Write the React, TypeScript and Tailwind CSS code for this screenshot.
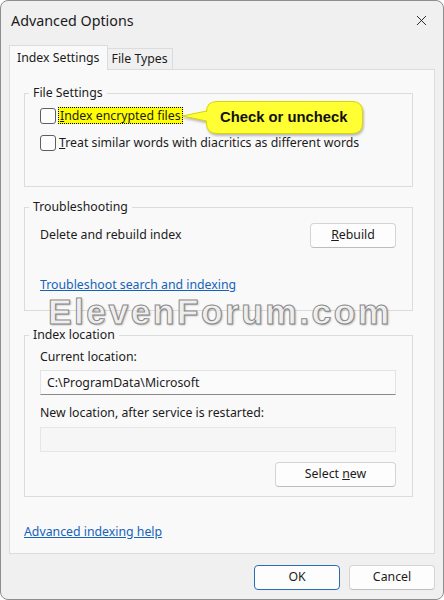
import React from 'react';
import { X } from 'lucide-react';

const ui = { fontFamily: '"Noto Sans", "Segoe UI", Arial, sans-serif' };

const Checkbox = () => (
  <span className="w-4 h-4 shrink-0 rounded-[3px] border border-[#5f5f5f] bg-[#fdfdfd]" />
);

const Button = ({ children, accent = false, className = '' }: { children: React.ReactNode; accent?: boolean; className?: string }) => (
  <button
    className={`h-[25px] rounded-[4px] bg-[#fdfdfd] text-[12.3px] text-[#1b1b1b] flex items-center justify-center ${
      accent ? 'border border-[#2a6bb3]' : 'border border-[#d4d4d4] border-b-[#bdbdbd]'
    } ${className}`}
  >
    {children}
  </button>
);

const GroupBox = ({ title, className = '', children }: { title: string; className?: string; children: React.ReactNode }) => (
  <fieldset className={`border border-[#dcdcdc] w-[389px] ${className}`}>
    <legend className="ml-[4px] px-[4px] text-[12.3px] leading-[16px] text-[#1b1b1b]">{title}</legend>
    {children}
  </fieldset>
);

export default function App() {
  return (
    <div
      className="relative w-[444px] h-[600px] bg-[#f0f0f0] border border-[#8e8e8e] rounded-[8px] overflow-hidden flex flex-col text-[#1b1b1b]"
      style={ui}
    >
      {/* Title bar */}
      <div className="h-[39px] flex items-center justify-between pl-[10px] pr-[13px] shrink-0">
        <span className="text-[14.3px]">Advanced Options</span>
        <X className="w-[17px] h-[17px] text-[#1b1b1b]" strokeWidth={1.3} />
      </div>

      {/* Tabs */}
      <div className="flex items-end pl-[8px] h-[30px] shrink-0 relative z-10">
        <div className="h-[25px] px-[7px] bg-[#f9f9f9] border border-[#dcdcdc] border-b-0 text-[12.3px] flex items-center">
          Index Settings
        </div>
        <div className="h-[21px] mb-[1px] px-[4px] bg-[#f0f0f0] border border-[#dcdcdc] border-l-0 border-b-0 text-[12.3px] flex items-center">
          File Types
        </div>
      </div>

      {/* Panel */}
      <div className="mx-[8px] -mt-[1px] h-[485px] bg-[#f9f9f9] border border-[#dcdcdc] pl-[14px] pt-[15px] flex flex-col text-[12.3px]">
        <GroupBox title="File Settings" className="h-[102px]">
          <div className="relative flex flex-col pl-[15px] pt-[6px] gap-[10px]">
            <div className="flex items-center gap-[2px]">
              <Checkbox />
              <span className="bg-[#ffff00] border border-dotted border-black px-[1px] leading-[15px]">
                <u>I</u>ndex encrypted files
              </span>
            </div>
            <div className="flex items-center gap-[3px]">
              <Checkbox />
              <span>
                <u>T</u>reat similar words with diacritics as different words
              </span>
            </div>
          </div>
        </GroupBox>

        <GroupBox title="Troubleshooting" className="h-[112px] mt-[12px]">
          <div className="flex items-center justify-between pl-[15px] pr-[16px] pt-[8px]">
            <span>Delete and rebuild index</span>
            <Button className="w-[86px]">
              <u>R</u>ebuild
            </Button>
          </div>
          <div className="pl-[15px] mt-[28px]">
            <span className="text-[#1463b9] underline">Troubleshoot search and indexing</span>
          </div>
        </GroupBox>

        <GroupBox title="Index location" className="h-[170px] mt-[16px]">
          <div className="flex flex-col pl-[15px] pr-[16px]">
            <span className="mt-[5px]">Current location:</span>
            <div className="mt-[4px] h-[25px] bg-[#fbfbfb] border border-[#e3e3e3] border-b-[#8a8a8a] flex items-center px-[6px]">
              C:\ProgramData\Microsoft
            </div>
            <span className="mt-[9px]">New location, after service is restarted:</span>
            <div className="mt-[4px] h-[25px] bg-[#f6f6f6] border border-[#e6e6e6]" />
            <div className="flex justify-end mt-[10px]">
              <Button className="w-[121px]">
                Select&nbsp;<u>n</u>ew
              </Button>
            </div>
          </div>
        </GroupBox>

        <div className="mt-[26px]">
          <span className="text-[#1463b9] underline">Advanced indexing help</span>
        </div>
      </div>

      {/* Footer buttons */}
      <div className="flex justify-end gap-[9px] pr-[8px] pt-[11px]">
        <Button accent className="w-[86px]">OK</Button>
        <Button className="w-[86px]">Cancel</Button>
      </div>

      {/* Callout */}
      <div className="absolute left-[180px] top-[98px] w-[186px] h-[38px]">
        <svg width="186" height="38" viewBox="0 0 186 38" className="absolute inset-0 drop-shadow-[1px_2px_1px_rgba(0,0,0,0.25)]">
          <path
            d="M36 2.5 H171 Q181.5 2.5 181.5 13 V24 Q181.5 34.5 171 34.5 H36 Q25.5 34.5 25.5 24 V22 L1.5 17 L25.5 12 V13 Q25.5 2.5 36 2.5 Z"
            fill="#ffff33"
            stroke="#d6d600"
            strokeWidth="1"
          />
        </svg>
        <span
          className="absolute left-[39px] top-[8px] text-[14.8px] font-bold text-[#111] leading-[20px]"
          style={{ fontFamily: '"Liberation Sans", Arial, sans-serif' }}
        >
          Check or uncheck
        </span>
      </div>

      {/* Watermark */}
      <div
        className="absolute left-[47px] top-[299px] text-[35.5px] font-bold leading-[24px] tracking-[2.4px] text-white/80 [-webkit-text-stroke:1px_#8a8a8a] [text-shadow:1px_1px_2px_rgba(0,0,0,0.35)] pointer-events-none"
        style={{ fontFamily: '"Liberation Sans", Arial, sans-serif' }}
      >
        ElevenForum.com
      </div>
    </div>
  );
}
